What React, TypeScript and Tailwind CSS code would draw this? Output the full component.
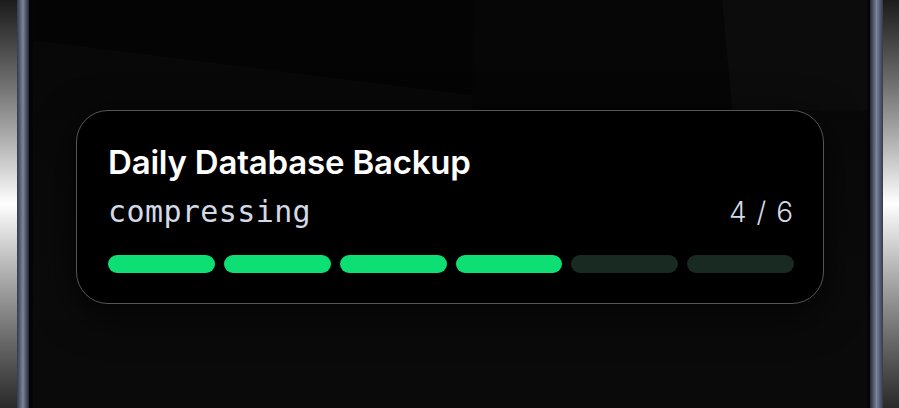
export default function App() {
  const total = 6
  const done = 4
  return (
    <div className="w-[899px] h-[408px] flex bg-black overflow-hidden" style={{ fontFamily: 'Inter, "Noto Sans", sans-serif' }}>
      <div className="w-[17px] h-full bg-gradient-to-b from-[#1c1c1c] via-white to-[#2a2a2a]" />
      <div className="w-[12px] h-full bg-gradient-to-r from-[#343a4b] via-[#7d859a] to-[#262a36]" />
      <div className="w-[4px] h-full bg-[#050507]" />

      <div className="relative flex-1 h-full bg-gradient-to-b from-[#070707] via-[#0a0a0a] to-[#0c0c0c] flex items-start">
        <svg className="absolute inset-0" width="100%" height="100%" viewBox="0 0 835 408" preserveAspectRatio="none">
          <polygon points="0,40 440,95 440,0 0,0" fill="#040404" />
          <polygon points="440,0 690,0 700,110 440,110" fill="#060606" />
          <polygon points="690,0 835,0 835,110 700,110" fill="#0c0c0c" />
          <polygon points="0,320 835,320 835,408 0,408" fill="#0a0a0a" />
        </svg>

        <div className="relative ml-[43px] mt-[110px] w-[748px] h-[194px] rounded-[32px] border border-[#555] bg-black pl-[31px] pr-[29px] pt-[32px] shadow-[0_10px_40px_rgba(0,0,0,0.8)]">
          <h1 className="text-[33px] leading-[38px] font-semibold text-white tracking-[-0.2px]">Daily Database Backup</h1>
          <div className="mt-[14px] flex items-baseline justify-between text-[#d3dae6]">
            <span className="text-[30px] leading-[34px] tracking-[0.4px]" style={{ fontFamily: '"DejaVu Sans Mono", monospace' }}>compressing</span>
            <span className="text-[28px] leading-[34px] font-light tracking-[1px]">4 / 6</span>
          </div>
          <div className="mt-[26px] grid grid-cols-6 gap-[9px]">
            {Array.from({ length: total }).map((_, i) => (
              <div key={i} className={`h-[18px] rounded-full ${i < done ? 'bg-[#0ddf74]' : 'bg-[#182a21]'}`} />
            ))}
          </div>
        </div>
      </div>

      <div className="w-[3px] h-full bg-[#050507]" />
      <div className="w-[13px] h-full bg-gradient-to-r from-[#262a36] via-[#7d859a] to-[#343a4b]" />
      <div className="w-[16px] h-full bg-gradient-to-b from-[#1c1c1c] via-white to-[#2a2a2a]" />
    </div>
  )
}
